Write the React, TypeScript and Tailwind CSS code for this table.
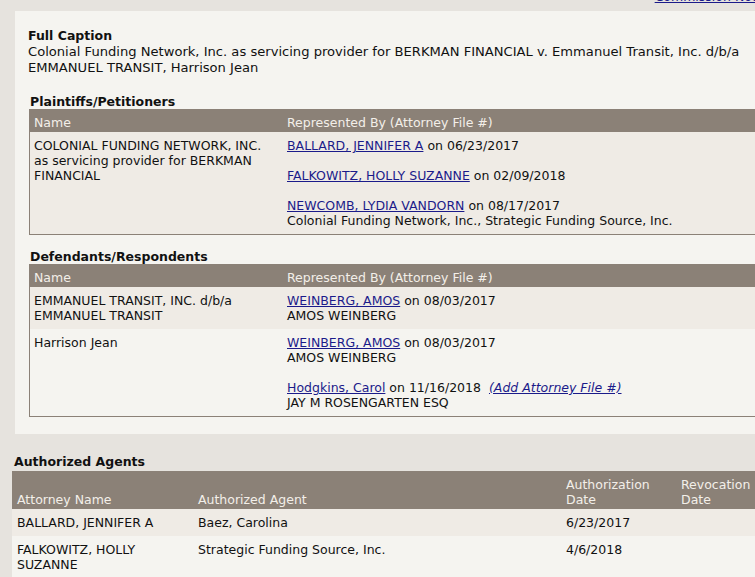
import React from 'react';

type Rep = { name: string; date: string; firm?: string; addFile?: boolean };
type Party = { name: string[]; reps: Rep[] };

const plaintiffs: Party[] = [
  {
    name: ['COLONIAL FUNDING NETWORK, INC.', 'as servicing provider for BERKMAN', 'FINANCIAL'],
    reps: [
      { name: 'BALLARD, JENNIFER A', date: '06/23/2017' },
      { name: 'FALKOWITZ, HOLLY SUZANNE', date: '02/09/2018' },
      {
        name: 'NEWCOMB, LYDIA VANDORN',
        date: '08/17/2017',
        firm: 'Colonial Funding Network, Inc., Strategic Funding Source, Inc.',
      },
    ],
  },
];

const defendants: Party[] = [
  {
    name: ['EMMANUEL TRANSIT, INC. d/b/a', 'EMMANUEL TRANSIT'],
    reps: [{ name: 'WEINBERG, AMOS', date: '08/03/2017', firm: 'AMOS WEINBERG' }],
  },
  {
    name: ['Harrison Jean'],
    reps: [
      { name: 'WEINBERG, AMOS', date: '08/03/2017', firm: 'AMOS WEINBERG' },
      { name: 'Hodgkins, Carol', date: '11/16/2018', firm: 'JAY M ROSENGARTEN ESQ', addFile: true },
    ],
  },
];

const agents = [
  { attorney: ['BALLARD, JENNIFER A'], agent: 'Baez, Carolina', auth: '6/23/2017', revoked: '' },
  { attorney: ['FALKOWITZ, HOLLY', 'SUZANNE'], agent: 'Strategic Funding Source, Inc.', auth: '4/6/2018', revoked: '' },
];

function PartyTable({ title, rows }: { title: string; rows: Party[] }) {
  return (
    <div>
      <h3 className="font-bold text-[12.5px] leading-[15px] pl-[1px]">{title}</h3>
      <div className="border-l border-b border-[#8b8177]">
        <div className="grid grid-cols-[253px_1fr] bg-[#8b8177] text-[#f3efe9] h-[23px] items-end pb-[2px]">
          <div className="pl-[4px]">Name</div>
          <div className="pl-[4px]">Represented By (Attorney File #)</div>
        </div>
        {rows.map((row, i) => (
          <div
            key={i}
            className={`grid grid-cols-[253px_1fr] pt-[6px] pb-[6px] ${i % 2 === 0 ? 'bg-[#efebe5]' : 'bg-[#f5f4f0]'}`}
          >
            <div className="pl-[4px]">
              {row.name.map((line) => (
                <div key={line}>{line}</div>
              ))}
            </div>
            <div className="pl-[4px] flex flex-col gap-[15px]">
              {row.reps.map((rep) => (
                <div key={rep.name}>
                  <div>
                    <a href="#" className="underline text-[#1b1b8a]">{rep.name}</a> on {rep.date}
                    {rep.addFile && (
                      <a href="#" className="underline italic text-[#1b1b8a] ml-[8px]">(Add Attorney File #)</a>
                    )}
                  </div>
                  {rep.firm && <div>{rep.firm}</div>}
                </div>
              ))}
            </div>
          </div>
        ))}
      </div>
    </div>
  );
}

export default function App() {
  return (
    <div className="w-[755px] h-[577px] overflow-hidden bg-[#e6e3de] text-[#111] font-['DejaVu_Sans',Verdana,sans-serif] text-[12.5px] leading-[15px]">
      <div className="h-[11px] overflow-hidden flex justify-end">
        <a href="#" className="underline text-[#1b1b8a] -mt-[11px] whitespace-nowrap -mr-[16px]">
          Commission Notes
        </a>
      </div>

      <div className="ml-[15px] w-[800px] bg-[#f5f4f0] pl-[13px] pt-[17px] pb-[17px]">
        <h2 className="font-bold text-[12.5px] leading-[16px]">Full Caption</h2>
        <p className="w-[730px] text-[13.1px] leading-[16px]">
          Colonial Funding Network, Inc. as servicing provider for BERKMAN FINANCIAL v. Emmanuel Transit, Inc. d/b/a
          EMMANUEL TRANSIT, Harrison Jean
        </p>

        <div className="mt-[18px] pl-[1px]">
          <PartyTable title="Plaintiffs/Petitioners" rows={plaintiffs} />
        </div>
        <div className="mt-[14px] pl-[1px]">
          <PartyTable title="Defendants/Respondents" rows={defendants} />
        </div>
      </div>

      <div className="mt-[20px] pl-[12px]">
        <h3 className="font-bold text-[12.5px] leading-[15px] pl-[2px] mb-[2px]">Authorized Agents</h3>
        <div className="w-[780px]">
          <div className="grid grid-cols-[182px_368px_115px_1fr] bg-[#8b8177] text-[#f3efe9] items-end pb-[2px] h-[38px]">
            <div className="pl-[5px]">Attorney Name</div>
            <div className="pl-[4px]">Authorized Agent</div>
            <div className="pl-[4px]">Authorization<br />Date</div>
            <div className="pl-[4px]">Revocation<br />Date</div>
          </div>
          {agents.map((a, i) => (
            <div
              key={i}
              className={`grid grid-cols-[182px_368px_115px_1fr] pt-[6px] pb-[6px] ${i % 2 === 0 ? 'bg-[#efebe5]' : 'bg-[#f5f4f0]'}`}
            >
              <div className="pl-[5px]">
                {a.attorney.map((l) => (
                  <div key={l}>{l}</div>
                ))}
              </div>
              <div className="pl-[4px]">{a.agent}</div>
              <div className="pl-[4px]">{a.auth}</div>
              <div className="pl-[4px]">{a.revoked}</div>
            </div>
          ))}
        </div>
      </div>
    </div>
  );
}
